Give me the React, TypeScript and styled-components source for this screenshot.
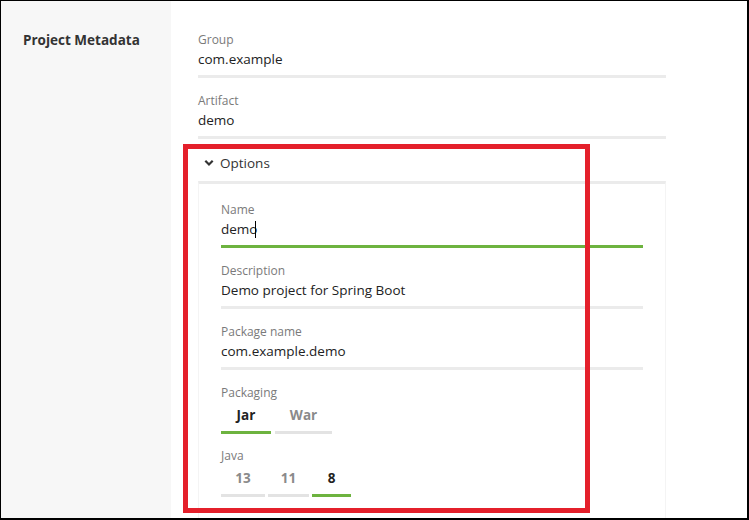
import React from "react";
import styled, { createGlobalStyle } from "styled-components";

const Global = createGlobalStyle`
  html, body { margin: 0; padding: 0; background: #fff; }
  body { font-family: "Open Sans", "Liberation Sans", sans-serif; }
  * { box-sizing: border-box; }
`;

const Frame = styled.div`
  position: relative;
  width: 749px;
  height: 520px;
  border-style: solid;
  border-color: #000;
  border-width: 1px 2px 2px 1px;
  display: flex;
  overflow: hidden;
  background: #fff;
`;

const Sidebar = styled.aside`
  width: 170px;
  flex: none;
  background: #f7f7f7;
  padding: 30px 0 0 22px;
`;

const SectionTitle = styled.h2`
  margin: 0;
  font-size: 13.5px;
  line-height: 18px;
  font-weight: 700;
  color: #333;
`;

const Main = styled.main`
  flex: none;
  width: 495px;
  padding: 31px 0 0 27px;
  display: flex;
  flex-direction: column;
`;

const Field = styled.div<{ $active?: boolean }>`
  display: flex;
  flex-direction: column;
  padding-bottom: 6px;
  border-bottom: 3px solid ${(p) => (p.$active ? "#6db33f" : "#ebebeb")};
  margin-bottom: 15px;
`;

const Label = styled.div`
  font-size: 12px;
  line-height: 16px;
  color: #7a7a7a;
`;

const Value = styled.div`
  margin-top: 1px;
  font-size: 13.5px;
  line-height: 20px;
  color: #222;
  white-space: nowrap;
`;

const Caret = styled.span`
  display: inline-block;
  width: 1px;
  height: 17px;
  background: #000;
  vertical-align: -4px;
  margin-left: -2px;
`;

const OptionsHeader = styled.div`
  margin-top: -15px;
  display: flex;
  align-items: center;
  gap: 6px;
  padding: 14px 0 8px 6px;
  font-size: 13.5px;
  line-height: 20px;
  color: #333;
`;

const Panel = styled.div`
  border-top: 3px solid #ebebeb;
  border-left: 1px solid #f4f4f4;
  border-right: 1px solid #f4f4f4;
  padding: 18px 22px 0 22px;
  height: 340px;
  display: flex;
  flex-direction: column;
`;

const Group = styled.div`
  display: flex;
  flex-direction: column;
  margin-bottom: 14px;
`;

const Choices = styled.div<{ $gap: number }>`
  display: flex;
  gap: ${(p) => p.$gap}px;
  margin-top: 4px;
`;

const Choice = styled.div<{ $selected?: boolean; $w: number }>`
  width: ${(p) => p.$w}px;
  padding-bottom: 6px;
  font-size: 13.5px;
  line-height: 20px;
  font-weight: 700;
  text-align: center;
  color: ${(p) => (p.$selected ? "#222" : "#8a8a8a")};
  border-bottom: 3px solid ${(p) => (p.$selected ? "#6db33f" : "#e3e3e3")};
`;

const Highlight = styled.div`
  position: absolute;
  left: 182px;
  top: 143px;
  width: 407px;
  height: 369px;
  border: 5px solid #e4202b;
  pointer-events: none;
`;

const Chevron = () => (
  <svg width="10" height="8" viewBox="0 0 10 8">
    <path d="M1.3 1.8 L5 5.5 L8.7 1.8" fill="none" stroke="#333" strokeWidth="2.2" />
  </svg>
);

export default function App() {
  return (
    <>
      <Global />
      <Frame>
        <Sidebar>
          <SectionTitle>Project Metadata</SectionTitle>
        </Sidebar>
        <Main>
          <Field>
            <Label>Group</Label>
            <Value>com.example</Value>
          </Field>
          <Field>
            <Label>Artifact</Label>
            <Value>demo</Value>
          </Field>
          <OptionsHeader>
            <Chevron />
            Options
          </OptionsHeader>
          <Panel>
            <Field $active>
              <Label>Name</Label>
              <Value>
                demo
                <Caret />
              </Value>
            </Field>
            <Field>
              <Label>Description</Label>
              <Value>Demo project for Spring Boot</Value>
            </Field>
            <Field>
              <Label>Package name</Label>
              <Value>com.example.demo</Value>
            </Field>
            <Group>
              <Label>Packaging</Label>
              <Choices $gap={4}>
                <Choice $selected $w={50}>Jar</Choice>
                <Choice $w={57}>War</Choice>
              </Choices>
            </Group>
            <Group>
              <Label>Java</Label>
              <Choices $gap={3}>
                <Choice $w={44}>13</Choice>
                <Choice $w={41}>11</Choice>
                <Choice $selected $w={39}>8</Choice>
              </Choices>
            </Group>
          </Panel>
        </Main>
        <Highlight />
      </Frame>
    </>
  );
}
